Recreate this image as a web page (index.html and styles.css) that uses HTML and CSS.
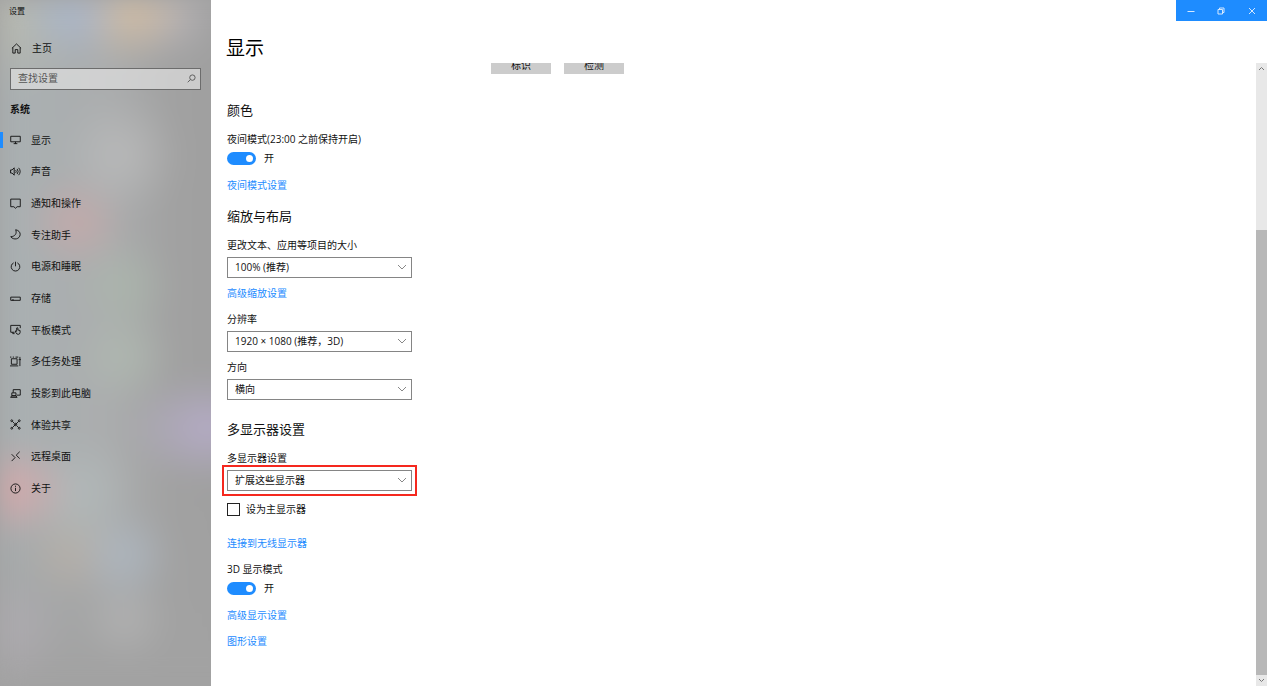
FILE: index.html
```html
<!DOCTYPE html>
<html lang="zh-CN">
  <head>
    <meta charset="UTF-8">
    <title>设置</title>
    <link rel="stylesheet" href="styles.css">
  </head>
  <body>
    <div class="window">
      <!-- 左侧导航 -->
      <aside class="sidebar">
        <div class="app-title">设置</div>
        <a class="nav-item home" href="#">
          <svg class="icon" viewBox="0 0 12 12"><path d="M1 5.8 6 1l5 4.8M2 5v6h2.6V7.2h2.8V11H10V5"/></svg>
          <span>主页</span>
        </a>
        <div class="search">
          <input type="text" class="search-box" placeholder="查找设置" aria-label="查找设置">
          <svg class="search-icon" viewBox="0 0 10 10"><circle cx="6" cy="4" r="3"/><path d="M3.8 6.2.8 9.2"/></svg>
        </div>
        <h2 class="group-title">系统</h2>
        <nav class="nav">
          <a class="nav-item active" href="#">
            <svg class="icon" viewBox="0 0 12 12"><path d="M.8 2.5h10.4v6H.8zM6 8.500v2M4 10.500h4"/></svg>
            <span>显示</span>
          </a>
          <a class="nav-item" href="#">
            <svg class="icon" viewBox="0 0 12 12"><path d="M.6 4.300h1.600L4.600 2v8L2.200 7.700H.6zM6.200 4.500q1.200 1.500 0 3M7.800 3.200q2.200 2.800 0 5.600M9.400 2q3.400 4 0 8"/></svg>
            <span>声音</span>
          </a>
          <a class="nav-item" href="#">
            <svg class="icon" viewBox="0 0 12 12"><path d="M.8 1.200h10.400v8.300H7.800L6 11.200 4.200 9.500H.8z"/></svg>
            <span>通知和操作</span>
          </a>
          <a class="nav-item" href="#">
            <svg class="icon" viewBox="0 0 12 12"><path d="M6.200.8c1.600 4-.6 7.400-5.400 7.600 3.200 4.200 9.900 2.800 10.300-2.400C11.200 3.500 9.400 1.500 6.200.8z"/></svg>
            <span>专注助手</span>
          </a>
          <a class="nav-item" href="#">
            <svg class="icon" viewBox="0 0 12 12"><path d="M4 2a4.700 4.700 0 1 0 4 0M6 .8v5"/></svg>
            <span>电源和睡眠</span>
          </a>
          <a class="nav-item" href="#">
            <svg class="icon" viewBox="0 0 12 12"><path d="M.8 4.500h10.400v3.500H.8z"/><path d="M2.200 7.600h2"/></svg>
            <span>存储</span>
          </a>
          <a class="nav-item" href="#">
            <svg class="icon" viewBox="0 0 12 12"><path d="M5 9H.8V1.500h10.400v3M3 9v1.500h2M7.300 8V4.300q.7-.9 1.300 0v2.200l2.400.6v2.200q-.3 2-2 2-1.700 0-2.600-1.900L5.800 7.600q.6-.6 1.500.4z"/></svg>
            <span>平板模式</span>
          </a>
          <a class="nav-item" href="#">
            <svg class="icon" viewBox="0 0 12 12"><path d="M1.500 3h6.200v6H1.500zM0 1.200h1.500M3 1.200h1.400M6 1.200h3M0 10.800h9M10.800 1v2M10.800 5.500V11"/><path d="M10 3.500h1.600v1H10z"/></svg>
            <span>多任务处理</span>
          </a>
          <a class="nav-item" href="#">
            <svg class="icon" viewBox="0 0 12 12"><path d="M3.500 5V1.800h7.700v6H7.500M2 5.300h4.500v3.200H2zM.6 10.200 2 8.500h4.500l1.200 1.700z"/></svg>
            <span>投影到此电脑</span>
          </a>
          <a class="nav-item" href="#">
            <svg class="icon" viewBox="0 0 12 12"><path d="m2.700 2.700 2 2M7.300 7.300l2 2M9.300 2.700 2.700 9.300"/><circle cx="6" cy="6" r="1.300"/><circle cx="1.900" cy="1.900" r="1"/><circle cx="10.100" cy="1.900" r="1"/><circle cx="1.900" cy="10.100" r="1"/><circle cx="10.100" cy="10.100" r="1"/></svg>
            <span>体验共享</span>
          </a>
          <a class="nav-item" href="#">
            <svg class="icon" viewBox="0 0 12 12"><path d="m1.800 3.500 3.700 3.700-3.700 3.800M10.600.8 6.800 4.500l3.800 3.800"/></svg>
            <span>远程桌面</span>
          </a>
          <a class="nav-item" href="#">
            <svg class="icon" viewBox="0 0 12 12"><circle cx="6" cy="6" r="5"/><path d="M6 5.200v3.600M6 3v1.200"/></svg>
            <span>关于</span>
          </a>
        </nav>
      </aside>

      <!-- 右侧内容 -->
      <main class="main">
        <header class="header">
          <h1 class="page-title">显示</h1>
          <div class="window-buttons">
            <button type="button" aria-label="最小化"><svg viewBox="0 0 8 8"><path d="M.5 4.500h7"/></svg></button>
            <button type="button" aria-label="还原"><svg viewBox="0 0 8 8"><path d="M1 2.500h4.500V7H1zM2.500 2.500V1H7v4.500H5.500"/></svg></button>
            <button type="button" aria-label="关闭"><svg viewBox="0 0 8 8"><path d="m1 1 6 6M7 1 1 7"/></svg></button>
          </div>
        </header>

        <div class="body">
          <div class="content">
            <div class="display-actions">
              <button type="button">标识</button>
              <button type="button">检测</button>
            </div>

            <section class="section">
              <h2>颜色</h2>
              <label class="label" for="nightMode">夜间模式(23:00 之前保持开启)</label>
              <div class="toggle-row">
                <input type="checkbox" role="switch" class="toggle" id="nightMode" checked>
                <span>开</span>
              </div>
              <a class="link" href="#">夜间模式设置</a>
            </section>

            <section class="section">
              <h2>缩放与布局</h2>
              <label class="label" for="scale">更改文本、应用等项目的大小</label>
              <div class="select">
                <select id="scale"><option>100% (推荐)</option></select>
                <svg class="chevron" viewBox="0 0 10 6"><path d="m1 1 4 4 4-4"/></svg>
              </div>
              <a class="link near" href="#">高级缩放设置</a>
              <label class="label" for="resolution">分辨率</label>
              <div class="select">
                <select id="resolution"><option>1920 × 1080 (推荐，3D)</option></select>
                <svg class="chevron" viewBox="0 0 10 6"><path d="m1 1 4 4 4-4"/></svg>
              </div>
              <label class="label near" for="orientation">方向</label>
              <div class="select">
                <select id="orientation"><option>横向</option></select>
                <svg class="chevron" viewBox="0 0 10 6"><path d="m1 1 4 4 4-4"/></svg>
              </div>
            </section>

            <section class="section multi">
              <h2>多显示器设置</h2>
              <label class="label" for="multi">多显示器设置</label>
              <div class="select highlight">
                <select id="multi"><option>扩展这些显示器</option></select>
                <svg class="chevron" viewBox="0 0 10 6"><path d="m1 1 4 4 4-4"/></svg>
              </div>
              <label class="check-row"><input type="checkbox" class="check">设为主显示器</label>
              <a class="link far" href="#">连接到无线显示器</a>
              <label class="label" for="mode3d">3D 显示模式</label>
              <div class="toggle-row">
                <input type="checkbox" role="switch" class="toggle" id="mode3d" checked>
                <span>开</span>
              </div>
              <a class="link" href="#">高级显示设置</a>
              <a class="link" href="#">图形设置</a>
            </section>
          </div>

          <!-- 滚动条 -->
          <div class="scrollbar">
            <svg viewBox="0 0 11 11"><path d="m3 7 2.500-2.500L8 7"/></svg>
            <div class="track"><div class="thumb"></div></div>
            <svg viewBox="0 0 11 11"><path d="m3 4 2.500 2.500L8 4"/></svg>
          </div>
        </div>
      </main>
    </div>
  </body>
</html>
```

FILE: styles.css
```css
/* 基本重置 */
*{box-sizing:border-box;}
html,body{margin:0;height:100%;}
body{font:10px/16px "Open Sans","Noto Sans CJK SC",sans-serif;color:#111;background:#fff;}
h1,h2{margin:0;font-weight:400;}
a{text-decoration:none;color:inherit;}
button,input,select{font:inherit;color:inherit;margin:0;}
svg{fill:none;stroke:currentColor;display:block;flex:none;}
.window{display:flex;height:100vh;overflow:hidden;}

/* 侧栏，亚克力背景 */
.sidebar{position:relative;z-index:0;width:211px;flex:none;overflow:hidden;background:#a2a2a2;}
.sidebar::before{
  content:"";position:absolute;inset:0 -30px 0 0;z-index:-1;filter:blur(12px);
  background:
    radial-gradient(circle 55px at 74px 10px,rgba(165,185,220,.6),transparent),
    radial-gradient(circle 60px at 128px 6px,rgba(222,194,160,.8),transparent),
    radial-gradient(circle 50px at 172px 14px,rgba(195,190,195,.6),transparent),
    radial-gradient(circle 90px at 0 10px,rgba(190,190,176,.8),transparent),
    radial-gradient(circle 60px at 122px 155px,rgba(194,194,194,.6),transparent),
    radial-gradient(circle 50px at 76px 222px,rgba(212,166,166,.6),transparent),
    radial-gradient(circle 50px at 124px 286px,rgba(172,188,172,.6),transparent),
    radial-gradient(circle 50px at 124px 356px,rgba(178,192,178,.6),transparent),
    radial-gradient(ellipse 80px 55px at 208px 428px,rgba(186,174,208,.8),transparent),
    radial-gradient(ellipse 70px 50px at 6px 490px,rgba(220,168,170,.9),transparent),
    radial-gradient(circle 60px at 80px 495px,rgba(182,192,192,.6),transparent),
    radial-gradient(circle 50px at 124px 556px,rgba(176,188,200,.7),transparent),
    radial-gradient(circle 50px at 72px 552px,rgba(190,178,166,.6),transparent),
    radial-gradient(circle 60px at 8px 630px,rgba(180,174,182,.6),transparent),
    radial-gradient(circle 45px at 126px 620px,rgba(184,184,184,.6),transparent),
    linear-gradient(to bottom,transparent 70%,#a2a2a2 98%),
    linear-gradient(to right,#a9b0b2 0,#abadae 45%,#a1a1a1 72%,#9f9f9f);
}
.app-title{font-size:8px;padding:3px 9px 0;height:32px;}
.nav-item{display:flex;align-items:center;gap:10px;padding-left:10px;}
.icon{width:11px;height:11px;}
.home{height:32px;padding-left:11px;}
.search{position:relative;margin:4px 10px 0;}
.search-box{display:block;width:100%;height:22px;padding:0 24px 2px 7px;border:1px solid #6c6c6c;background:rgba(228,228,228,.65);}
.search-box::placeholder{color:#555;opacity:1;}
.search-icon{position:absolute;right:5px;top:6px;width:9px;height:9px;color:#555;}
.group-title{font-size:10px;font-weight:700;padding:11px 10px 0;height:34px;}
.nav{height:380px;display:grid;grid-auto-rows:1fr;align-items:center;}
.active{position:relative;}
.active::before{content:"";position:absolute;left:0;width:3px;height:16px;background:#1e8cff;}

/* 标题栏 */
.main{flex:1;min-width:0;display:flex;flex-direction:column;}
.header{display:flex;justify-content:space-between;align-items:flex-start;height:63px;flex:none;}
.page-title{font-size:19px;line-height:28px;padding:34px 0 0 15px;color:#000;}
.window-buttons{display:flex;background:#1e8cff;}
.window-buttons button{display:flex;align-items:center;justify-content:center;width:30px;height:21px;padding:0;border:0;background:none;color:#d4e8ff;}
.window-buttons button:last-child{width:31px;}
.window-buttons svg{width:8px;height:8px;}

/* 设置内容 */
.body{flex:1;min-height:0;display:flex;}
.content{flex:1;overflow:hidden;padding-left:16px;}
.display-actions{display:flex;gap:13px;margin:-10px 0 27px 264px;}
.display-actions button{width:60px;height:21px;padding:2px 0 0;border:0;background:#ccc;}
.section{display:flex;flex-direction:column;align-items:flex-start;margin-bottom:14px;}
.section h2{font-size:13px;line-height:18px;}
.label{margin-top:10px;}
h2 + .label{margin-top:12px;}
.link{margin-top:10px;color:#1e8cff;}
.label.near,.link.near{margin-top:7px;}
.link.far{margin-top:18px;}
.multi{margin-top:20px;}
.toggle-row{display:flex;align-items:center;gap:8px;margin-top:3px;}
.toggle-row + .link{margin-top:11px;}
.toggle{appearance:none;width:29px;height:13px;border-radius:7px;background:#bbb;display:flex;align-items:center;padding:0 3px;}
.toggle:checked{background:#1e8cff;justify-content:flex-end;}
.toggle::before{content:"";width:7px;height:7px;border-radius:50%;background:#fff;}
.select{position:relative;width:185px;margin-top:4px;}
.select select{appearance:none;display:block;width:100%;height:21px;padding:0 24px 2px 7px;border:1px solid #858585;border-radius:0;background:#fff;}
.chevron{position:absolute;right:5px;top:7px;width:10px;height:6px;color:#888;pointer-events:none;}
.highlight{outline:2px solid #f5281e;outline-offset:3px;}
.check-row{display:flex;align-items:center;gap:6px;margin-top:10px;}
.check{appearance:none;width:13px;height:13px;border:1px solid #222;background:#fff;}

/* 滚动条 */
.scrollbar{width:11px;flex:none;display:flex;flex-direction:column;background:#e8e8e8;color:#777;}
.scrollbar svg{width:11px;height:11px;}
.track{flex:1;display:flex;flex-direction:column;justify-content:flex-end;}
.thumb{height:74%;background:#b8b8b8;}
```
